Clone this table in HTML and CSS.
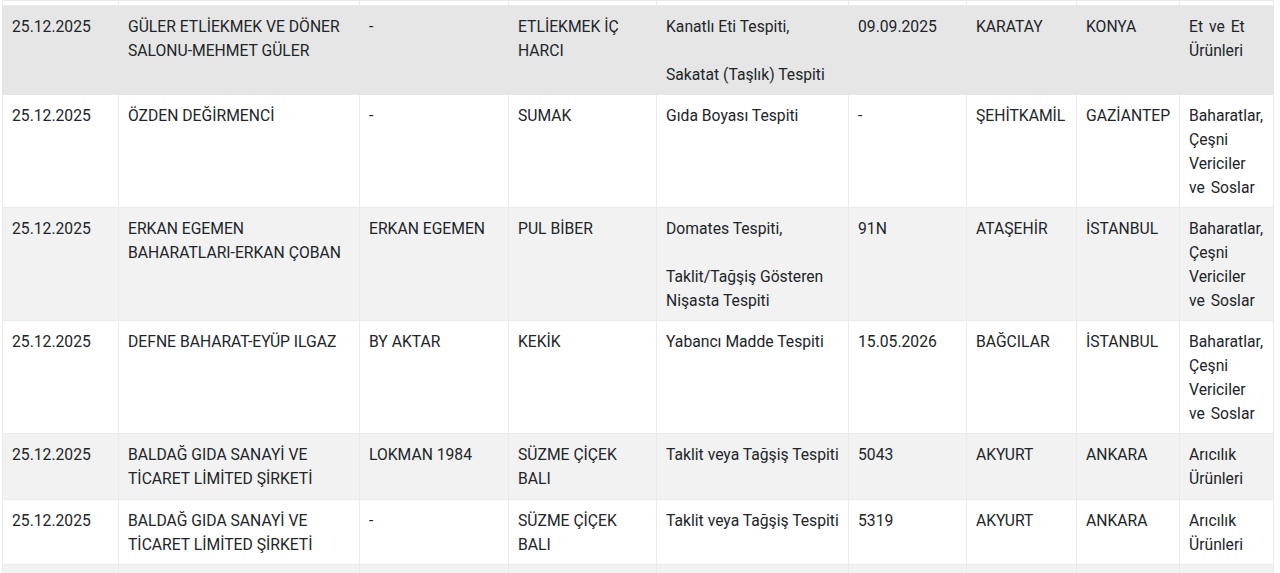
FILE: index.html
```html
<!DOCTYPE html>
<html lang="tr">
<head>
<meta charset="utf-8">
<title>Tablo</title>
<link rel="stylesheet" href="styles.css">
</head>
<body>
<div class="wrap">
<table class="list">
<colgroup>
<col class="c1"><col class="c2"><col class="c3"><col class="c4"><col class="c5"><col class="c6"><col class="c7"><col class="c8"><col class="c9">
</colgroup>
<tbody>
<tr class="spacer"><td></td><td></td><td></td><td></td><td></td><td></td><td></td><td></td><td></td></tr>
<tr class="hover">
<td>25.12.2025</td><td>GÜLER ETLİEKMEK VE DÖNER SALONU-MEHMET GÜLER</td><td>-</td><td>ETLİEKMEK İÇ HARCI</td><td>Kanatlı Eti Tespiti,<br><br>Sakatat (Taşlık) Tespiti</td><td>09.09.2025</td><td>KARATAY</td><td>KONYA</td><td>Et ve Et Ürünleri</td>
</tr>
<tr>
<td>25.12.2025</td><td>ÖZDEN DEĞİRMENCİ</td><td>-</td><td>SUMAK</td><td>Gıda Boyası Tespiti</td><td>-</td><td>ŞEHİTKAMİL</td><td>GAZİANTEP</td><td>Baharatlar, Çeşni Vericiler ve Soslar</td>
</tr>
<tr class="alt">
<td>25.12.2025</td><td>ERKAN EGEMEN BAHARATLARI-ERKAN ÇOBAN</td><td>ERKAN EGEMEN</td><td>PUL BİBER</td><td>Domates Tespiti,<br><br>Taklit/Tağşiş Gösteren Nişasta Tespiti</td><td>91N</td><td>ATAŞEHİR</td><td>İSTANBUL</td><td>Baharatlar, Çeşni Vericiler ve Soslar</td>
</tr>
<tr>
<td>25.12.2025</td><td>DEFNE BAHARAT-EYÜP ILGAZ</td><td>BY AKTAR</td><td>KEKİK</td><td>Yabancı Madde Tespiti</td><td>15.05.2026</td><td>BAĞCILAR</td><td>İSTANBUL</td><td>Baharatlar, Çeşni Vericiler ve Soslar</td>
</tr>
<tr class="alt">
<td>25.12.2025</td><td>BALDAĞ GIDA SANAYİ VE TİCARET LİMİTED ŞİRKETİ</td><td>LOKMAN 1984</td><td>SÜZME ÇİÇEK BALI</td><td>Taklit veya Tağşiş Tespiti</td><td>5043</td><td>AKYURT</td><td>ANKARA</td><td>Arıcılık Ürünleri</td>
</tr>
<tr>
<td>25.12.2025</td><td>BALDAĞ GIDA SANAYİ VE TİCARET LİMİTED ŞİRKETİ</td><td>-</td><td>SÜZME ÇİÇEK BALI</td><td>Taklit veya Tağşiş Tespiti</td><td>5319</td><td>AKYURT</td><td>ANKARA</td><td>Arıcılık Ürünleri</td>
</tr>
<tr class="alt tail"><td></td><td></td><td></td><td></td><td></td><td></td><td></td><td></td><td></td></tr>
</tbody>
</table>
</div>
</body>
</html>
```
FILE: styles.css
```css
html, body {
  margin: 0;
  padding: 0;
  background: #ffffff;
}
body {
  font-family: Roboto, "Noto Sans", "Liberation Sans", sans-serif;
  font-size: 15.7px;
  color: #212529;
}
.wrap {
  padding-left: 2px;
  width: 1272px;
}
.list {
  width: 1272px;
  table-layout: fixed;
  border-collapse: collapse;
  border-right: 1px solid #ececec;
}
.c1 { width: 116px; }
.c2 { width: 241px; }
.c3 { width: 149px; }
.c4 { width: 148px; }
.c5 { width: 192px; }
.c6 { width: 118px; }
.c7 { width: 110px; }
.c8 { width: 103px; }
.c9 { width: 94px; }
.list td {
  border: 1px solid #ebebeb;
  padding: 9px 8px 8px 9px;
  line-height: 23.75px;
  vertical-align: top;
  text-align: left;
  word-wrap: break-word;
}
.list td:nth-child(5),
.list td:nth-child(8) {
  padding-right: 4px;
}
.list td:last-child {
  padding-right: 7px;
  word-spacing: 2px;
}
.list tr.alt td {
  background: #f2f2f2;
}
.list tr.hover td {
  background: #e6e6e6;
  border-color: #e6e6e6;
}
.list tr.spacer td {
  height: 4px;
  padding: 0;
  line-height: 4px;
}
.list tr.tail td {
  height: 40px;
}
```
